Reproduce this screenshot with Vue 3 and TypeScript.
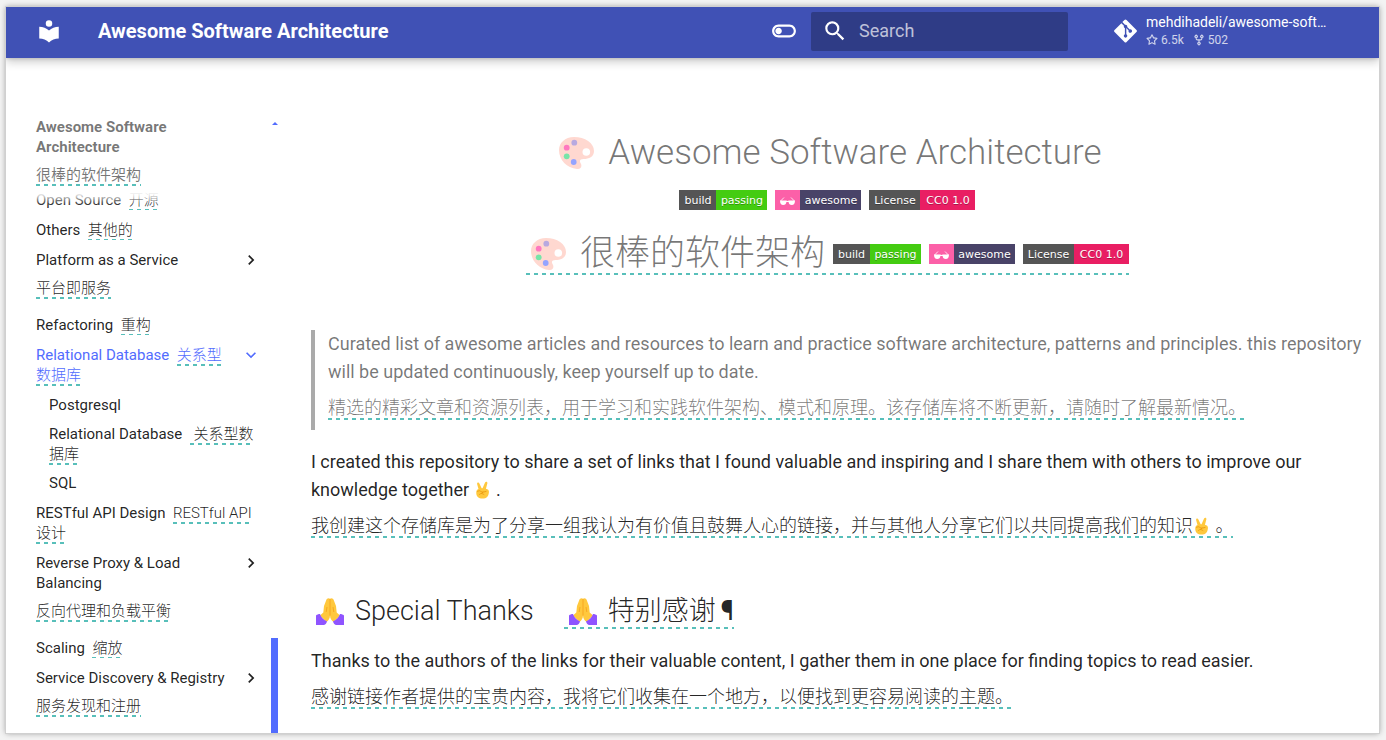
<script setup lang="ts">
interface NavItem {
  text: string
  zh?: string
  block?: boolean
  open?: boolean
  more?: boolean
  thick?: boolean
  children?: NavItem[]
}

const nav: NavItem[] = [
  { text: 'Open Source', zh: '开源' },
  { text: 'Others', zh: '其他的' },
  { text: 'Platform as a Service', zh: '平台即服务', block: true, more: true },
  { text: 'Refactoring', zh: '重构' },
  {
    text: 'Relational Database',
    zh: '关系型数据库',
    open: true,
    more: true,
    thick: true,
    children: [
      { text: 'Postgresql' },
      { text: 'Relational Database', zh: '\u00a0关系型数据库', thick: true },
      { text: 'SQL' },
    ],
  },
  { text: 'RESTful API Design', zh: 'RESTful API 设计', thick: true },
  { text: 'Reverse Proxy & Load Balancing', zh: '反向代理和负载平衡', block: true, more: true },
  { text: 'Scaling', zh: '缩放' },
  { text: 'Service Discovery & Registry', zh: '服务发现和注册', block: true, more: true },
]

const headings = [
  { text: 'Awesome Software Architecture', translated: false },
  { text: '很棒的软件架构', translated: true },
]
</script>

<template>
  <div class="window">
    <header class="header">
      <a class="logo" href="#" aria-label="Home">
        <svg viewBox="0 0 24 24"><path d="M12 8a3 3 0 0 0 3-3 3 3 0 0 0-3-3 3 3 0 0 0-3 3 3 3 0 0 0 3 3m0 3.54C9.64 9.35 6.5 8 3 8v11c3.5 0 6.64 1.35 9 3.54 2.36-2.19 5.5-3.54 9-3.54V8c-3.5 0-6.64 1.35-9 3.54Z" /></svg>
      </a>
      <div class="site-title">Awesome Software Architecture</div>
      <button class="toggle" type="button" aria-label="Switch to dark mode">
        <svg viewBox="0 0 24 24"><path d="M17 6H7c-3.31 0-6 2.69-6 6s2.69 6 6 6h10c3.31 0 6-2.69 6-6s-2.69-6-6-6zm0 10H7c-2.21 0-4-1.79-4-4s1.79-4 4-4h10c2.21 0 4 1.79 4 4s-1.79 4-4 4zM7 9c-1.66 0-3 1.34-3 3s1.34 3 3 3 3-1.34 3-3-1.34-3-3-3z" /></svg>
      </button>
      <label class="search">
        <svg viewBox="0 0 24 24"><path d="M9.5 3A6.5 6.5 0 0 1 16 9.5c0 1.61-.59 3.09-1.56 4.23l.27.27h.79l5 5-1.5 1.5-5-5v-.79l-.27-.27A6.516 6.516 0 0 1 9.5 16 6.5 6.5 0 0 1 3 9.5 6.5 6.5 0 0 1 9.5 3m0 2C7 5 5 7 5 9.5S7 14 9.5 14 14 12 14 9.5 12 5 9.5 5Z" /></svg>
        <input type="text" placeholder="Search" aria-label="Search" />
      </label>
      <a class="repo" href="#">
        <svg class="git" viewBox="0 0 448 512"><path d="M439.55 236.05 244 40.45a28.87 28.87 0 0 0-40.81 0l-40.66 40.63 51.52 51.52c27.06-9.14 52.68 16.77 43.39 43.68l49.66 49.66c34.23-11.8 61.18 31 35.47 56.69-26.49 26.49-70.21-2.87-56-37.34L240.22 199v121.85c25.3 12.54 22.26 41.85 9.08 55a34.34 34.34 0 0 1-48.55 0c-17.57-17.6-11.07-46.91 11.25-56v-123c-20.8-8.51-24.6-30.74-18.64-45L142.57 101 8.45 235.14a28.86 28.86 0 0 0 0 40.81l195.61 195.6a28.86 28.86 0 0 0 40.8 0l194.69-194.69a28.86 28.86 0 0 0 0-40.81z" /></svg>
        <span class="repo-info">
          <span class="repo-name">mehdihadeli/awesome-soft…</span>
          <span class="facts">
            <svg viewBox="0 0 16 16"><path d="M8 .25a.75.75 0 0 1 .673.418l1.882 3.815 4.21.612a.75.75 0 0 1 .416 1.279l-3.046 2.97.719 4.192a.751.751 0 0 1-1.088.791L8 12.347l-3.766 1.98a.75.75 0 0 1-1.088-.79l.72-4.194L.818 6.374a.75.75 0 0 1 .416-1.28l4.21-.611L7.327.668A.75.75 0 0 1 8 .25Zm0 2.445L6.615 5.5a.75.75 0 0 1-.564.41l-3.097.45 2.24 2.184a.75.75 0 0 1 .216.664l-.528 3.084 2.769-1.456a.75.75 0 0 1 .698 0l2.77 1.456-.53-3.084a.75.75 0 0 1 .216-.664l2.24-2.183-3.096-.45a.75.75 0 0 1-.564-.41L8 2.694Z" /></svg>
            <span class="fact">6.5k</span>
            <svg viewBox="0 0 16 16"><path d="M5 5.372v.878c0 .414.336.75.75.75h4.5a.75.75 0 0 0 .75-.75v-.878a2.25 2.25 0 1 1 1.5 0v.878a2.25 2.25 0 0 1-2.25 2.25h-1.5v2.128a2.251 2.251 0 1 1-1.5 0V8.5h-1.5A2.25 2.25 0 0 1 3.5 6.25v-.878a2.25 2.25 0 1 1 1.5 0ZM5 3.25a.75.75 0 1 0-1.5 0 .75.75 0 0 0 1.5 0Zm6.75.75a.75.75 0 1 0 0-1.5.75.75 0 0 0 0 1.5Zm-3 8.75a.75.75 0 1 0-1.5 0 .75.75 0 0 0 1.5 0Z" /></svg>
            <span class="fact">502</span>
          </span>
        </span>
      </a>
    </header>

    <div class="body">
      <nav class="sidebar" aria-label="Navigation">
        <div class="nav-column">
          <div class="nav-title">
            Awesome Software Architecture
            <div class="zh-block"><span class="zh">很棒的软件架构</span></div>
          </div>
          <ul class="nav-list">
            <li v-for="item in nav" :key="item.text">
              <a class="nav-link" :class="{ active: item.open }" href="#">
                <span class="label" :class="{ narrow: item.more }">
                  {{ item.text }}
                  <template v-if="item.zh && !item.block">&nbsp;<span class="zh" :class="{ thin: !item.thick }">{{ item.zh }}</span></template>
                </span>
                <svg v-if="item.more" class="chevron" :class="{ down: item.open }" viewBox="0 0 24 24"><path d="M8.59 16.58 13.17 12 8.59 7.41 10 6l6 6-6 6-1.41-1.42Z" /></svg>
              </a>
              <div v-if="item.block" class="zh-block after"><span class="zh">{{ item.zh }}</span></div>
              <ul v-if="item.children" class="sub-list">
                <li v-for="child in item.children" :key="child.text">
                  <a class="nav-link" href="#">
                    <span class="label">
                      {{ child.text }}
                      <template v-if="child.zh">&nbsp;<span class="zh">{{ child.zh }}</span></template>
                    </span>
                  </a>
                </li>
              </ul>
            </li>
          </ul>
        </div>
        <div class="scrollbar"><span class="arrow"></span><span class="thumb"></span></div>
      </nav>

      <main class="content">
        <h1 v-for="h in headings" :key="h.text" :class="{ translated: h.translated }">
          <span class="h1-inner">
            <span class="h1-text">
              <svg class="palette" viewBox="0 0 35 32">
                <path fill="#ffd8d0" d="M15 0C6 0 0 6 0 13c0 10 8 18 18 19 4 .3 5.500-3 3.500-6-1.500-2.500 0-4 3-4C30 22 35 20 35 14 35 6 26 0 15 0Z" />
                <circle cx="27.3" cy="15" r="3.8" fill="#fff" />
                <circle cx="15.3" cy="5.7" r="2.9" fill="#b8a9e0" />
                <circle cx="7.7" cy="10.7" r="2.9" fill="#ff78bf" />
                <circle cx="7.7" cy="19.3" r="2.9" fill="#76e5a8" />
                <circle cx="14.7" cy="25" r="2.9" fill="#94a4ff" />
              </svg>
              <span>{{ h.text }}</span>
            </span>
            <span class="badges">
              <span class="badge"><span class="grey w37">build</span><span class="green w51">passing</span></span>
              <span class="badge">
                <span class="pink w25">
                  <svg class="shades" viewBox="0 0 15 8"><path fill="#fff" d="M0 3.500h6.200c.6.600 2 .6 2.600 0H15C15 6.500 13.800 8 11.800 8 9.800 8 8.800 6.700 8.600 5H6.400C6.200 6.700 5.200 8 3.200 8 1.200 8 0 6.500 0 3.500Z" /><path fill="none" stroke="#fff" stroke-width=".8" d="M.6 4 4 .5M14.400 4 11 .5" /></svg>
                </span><span class="plum w61">awesome</span>
              </span>
              <span class="badge"><span class="grey w51">License</span><span class="red w55">CC0 1.0</span></span>
            </span>
          </span>
        </h1>

        <blockquote>
          <p>Curated list of awesome articles and resources to learn and practice software architecture, patterns and principles. this repository will be updated continuously, keep yourself up to date.</p>
          <p class="translation"><span class="zh">精选的精彩文章和资源列表，用于学习和实践软件架构、模式和原理。该存储库将不断更新，请随时了解最新情况。</span></p>
        </blockquote>

        <p>
          I created this repository to share a set of links that I found valuable and inspiring and I share them with others to improve our knowledge together
          <svg class="victory" viewBox="0 0 20 20"><use href="#victory-hand" /></svg> .
        </p>
        <p class="translation">
          <span class="zh">我创建这个存储库是为了分享一组我认为有价值且鼓舞人心的链接，并与其他人分享它们以共同提高我们的知识<svg class="victory" viewBox="0 0 20 20">
            <g id="victory-hand">
              <path fill="#ffc83d" d="M5 9 3.500 3.500C3 1.500 5.300.8 6 2.700L8.500 8h1L12.300 1.700c.8-1.800 3-1 2.500 1L13.300 8.500c2.700.5 3.700 2 3.200 4.500-.5 4-2.500 6.500-7 6.500C5 19.500 2.500 17 2.500 13c0-2.300.8-3.500 2.500-4Z" />
              <path fill="none" stroke="#e8960f" stroke-width=".9" stroke-linecap="round" d="M4 11.500c2-1 3-1 4 .5 1.500 1 3.500 0 5.500-.5M6 15c2-2 3-1 5 0M10 12l-1.500 2" />
            </g>
          </svg> 。</span>
        </p>

        <h2>
          <svg class="pray" viewBox="0 0 28 27">
            <g id="praying-hands">
              <path fill="#ffc83d" d="M14 .8C12.800-.5 10.800.2 10.300 2L8 8l-.7 6.500L4 17.500 10.500 24c2-1.500 3.500-3.500 3.500-6.500 0 3 1.500 5 3.500 6.500l6.500-6.500-3.300-3L20 8l-2.300-6C17.200.2 15.200-.5 14 .8Z" />
              <path fill="#8f54ff" d="M0 17.500C1 16.500 2.500 16 4 16c1 3 3.500 5.500 7 7.500-.3 1.500-1.500 3-3 3.500H0ZM28 17.500c-1-1-2.500-1.500-4-1.500-1 3-3.500 5.500-7 7.500.3 1.500 1.500 3 3 3.500h8Z" />
              <path fill="none" stroke="#f59f1c" stroke-width=".8" d="M14 1v16.500M11 9l-.8 5M17 9l.8 5" />
            </g>
          </svg>
          <span>Special Thanks</span>
          <span class="h2-zh"><svg class="pray" viewBox="0 0 28 27"><use href="#praying-hands" /></svg><span>特别感谢</span><a class="pilcrow" href="#" aria-label="Permanent link">¶</a></span>
        </h2>
        <p>Thanks to the authors of the links for their valuable content, I gather them in one place for finding topics to read easier.</p>
        <p class="translation"><span class="zh">感谢链接作者提供的宝贵内容，我将它们收集在一个地方，以便找到更容易阅读的主题。</span></p>
      </main>
    </div>
  </div>
</template>

<style>
body {
  background: #f3f3f3;
}
</style>

<style scoped>
.window {
  box-sizing: border-box;
  height: calc(100vh - 14px);
  margin: 7px 7px 7px 6px;
  overflow: hidden;
  background: #fff;
  outline: 1px solid #d0d0d0;
  box-shadow: 0 0 6px rgba(0, 0, 0, 0.4);
  color: rgba(0, 0, 0, 0.87);
  font-family: Roboto, 'Noto Sans CJK SC', sans-serif;
  font-size: 18px;
  line-height: 28px;
  display: flex;
  flex-direction: column;
}
a {
  color: inherit;
  text-decoration: none;
}
svg {
  fill: currentColor;
  flex: none;
}
ul {
  list-style: none;
  margin: 0;
  padding: 0;
}
p,
h1,
h2,
blockquote {
  margin: 0;
}

.header {
  display: flex;
  align-items: center;
  flex: none;
  box-sizing: border-box;
  height: 51px;
  padding: 0 48px 3px 30px;
  background: #4051b5;
  color: #fff;
  box-shadow: 0 0 4px rgba(0, 0, 0, 0.2), 0 4px 9px rgba(0, 0, 0, 0.2);
  position: relative;
  z-index: 3;
}
.logo,
.logo svg,
.toggle svg,
.search svg {
  display: block;
}
.logo svg {
  width: 26px;
  height: 26px;
}
.site-title {
  flex: 1;
  margin-left: 36px;
  font-size: 20px;
  font-weight: 700;
}
.toggle {
  padding: 0;
  border: 0;
  background: none;
  color: inherit;
  margin-right: 14px;
}
.toggle svg {
  width: 26px;
  height: 26px;
}
.search {
  display: flex;
  align-items: center;
  box-sizing: border-box;
  width: 257px;
  height: 39px;
  padding-left: 11px;
  gap: 11px;
  border-radius: 2px;
  background: #2f3c86;
}
.search svg {
  width: 26px;
  height: 26px;
}
.search input {
  flex: 1;
  min-width: 0;
  padding: 0;
  border: 0;
  outline: 0;
  background: none;
  color: #fff;
  font: inherit;
}
.search input::placeholder {
  color: rgba(255, 255, 255, 0.7);
}
.repo {
  display: flex;
  align-items: center;
  gap: 9px;
  width: 217px;
  margin-left: 46px;
}
.git {
  width: 23px;
  height: 26px;
}
.repo-info {
  display: flex;
  flex-direction: column;
  min-width: 0;
}
.repo-name {
  font-size: 14px;
  line-height: 18px;
  white-space: nowrap;
}
.facts {
  display: flex;
  align-items: center;
  font-size: 12px;
  line-height: 18px;
  opacity: 0.75;
}
.facts svg {
  width: 12px;
  height: 12px;
  margin-right: 3px;
}
.fact {
  margin-right: 9px;
}

.body {
  display: flex;
  flex: 1;
  min-height: 0;
}
.sidebar {
  display: flex;
  flex: none;
  width: 272px;
  padding: 59px 0 0 30px;
  box-sizing: border-box;
  font-size: 15px;
  line-height: 20px;
}
.nav-column {
  flex: 1;
  min-width: 0;
}
.nav-title {
  position: relative;
  z-index: 1;
  padding-right: 60px;
  background: #fff;
  box-shadow: 0 0 8px 14px #fff;
  color: rgba(0, 0, 0, 0.54);
  font-weight: 700;
}
.zh-block {
  margin-top: 8px;
}
.zh-block.after {
  margin-bottom: 17px;
}
.nav-list {
  padding-top: 5px;
}
.nav-list > li {
  margin-bottom: 10px;
}
.sub-list {
  display: flex;
  flex-direction: column;
  gap: 9px;
  padding: 10px 0 0 13px;
}
.nav-link {
  display: flex;
  align-items: flex-start;
  justify-content: space-between;
}
.label {
  max-width: 224px;
}
.label.narrow {
  max-width: 198px;
}
.sub-list .label {
  max-width: 211px;
}
.chevron {
  width: 20px;
  height: 20px;
  margin-right: 10px;
}
.down {
  transform: rotate(90deg);
}
.active {
  color: #526cfe;
}
.zh {
  padding-bottom: 2px;
  background: repeating-linear-gradient(90deg, #58bfba 0 4px, transparent 4px 8px) left bottom / 100% 2px no-repeat;
  -webkit-box-decoration-break: clone;
  box-decoration-break: clone;
  font-weight: 300;
}
.nav-title .zh {
  font-weight: 400;
}
.zh.thin {
  padding-bottom: 1px;
  background-size: 100% 1px;
}
.scrollbar {
  position: relative;
  z-index: 2;
  display: flex;
  flex: none;
  flex-direction: column;
  justify-content: space-between;
  align-items: center;
  width: 7px;
}
.arrow {
  margin-top: 5px;
  border: 3px solid transparent;
  border-top: 0;
  border-bottom-color: #526cfe;
}
.thumb {
  width: 7px;
  height: 95px;
  background: #526cfe;
}

.content {
  flex: 1;
  min-width: 0;
  padding: 72px 14px 0 33px;
}
h1 {
  padding-right: 15px;
  color: rgba(0, 0, 0, 0.54);
  font-size: 35px;
  font-weight: 300;
  line-height: 46px;
  text-align: center;
}
.h1-inner {
  display: inline-flex;
  flex-direction: column;
  align-items: center;
}
.h1-text {
  display: flex;
  align-items: center;
  gap: 14px;
}
h1.translated {
  margin-top: 23px;
  padding-right: 21px;
  line-height: 42px;
}
.translated .h1-inner {
  flex-direction: row;
  gap: 8px;
  padding-left: 5px;
  background: repeating-linear-gradient(90deg, #58bfba 0 4px, transparent 4px 8px) left bottom / 100% 2px no-repeat;
}
.palette {
  width: 35px;
  height: 32px;
}
.badges {
  display: flex;
  gap: 8px;
  margin-top: 14px;
  padding-right: 6px;
}
.translated .badges {
  margin-top: 0;
  padding-right: 0;
}
.badge {
  display: flex;
  height: 20px;
  color: #fff;
  font-family: 'DejaVu Sans', sans-serif;
  font-size: 11px;
  font-weight: 400;
  line-height: 18px;
  text-shadow: 0 1px 0 rgba(1, 1, 1, 0.3);
}
.badge > span {
  display: flex;
  align-items: center;
  justify-content: center;
  box-sizing: border-box;
  padding-top: 1px;
}
.grey {
  background: #555;
}
.green {
  background: #4c1;
}
.pink {
  background: #fc60a8;
}
.plum {
  background: #494368;
}
.red {
  background: #e91e63;
}
.w25 {
  width: 25px;
}
.w37 {
  width: 37px;
}
.w51 {
  width: 51px;
}
.w55 {
  width: 55px;
}
.w61 {
  width: 61px;
}
.shades {
  width: 15px;
  height: 8px;
}
blockquote {
  margin: 50px 0 18px;
  padding-left: 13px;
  border-left: 4px solid #aaa;
  color: rgba(0, 0, 0, 0.54);
}
.translation {
  margin-top: 8px;
}
blockquote .translation {
  padding-bottom: 8px;
}
.victory {
  width: 18px;
  height: 18px;
  vertical-align: -3px;
}
h2 {
  display: flex;
  align-items: center;
  margin: 53px 0 18px;
  font-size: 27px;
  font-weight: 300;
  line-height: 36px;
}
.pray {
  width: 28px;
  height: 27px;
  margin: 0 11px 0 5px;
}
.h2-zh {
  display: flex;
  align-items: center;
  margin-left: 30px;
  background: repeating-linear-gradient(90deg, #58bfba 0 4px, transparent 4px 8px) left bottom / 100% 2px no-repeat;
}
.pilcrow {
  margin-left: 5px;
  font-weight: 400;
}
</style>
